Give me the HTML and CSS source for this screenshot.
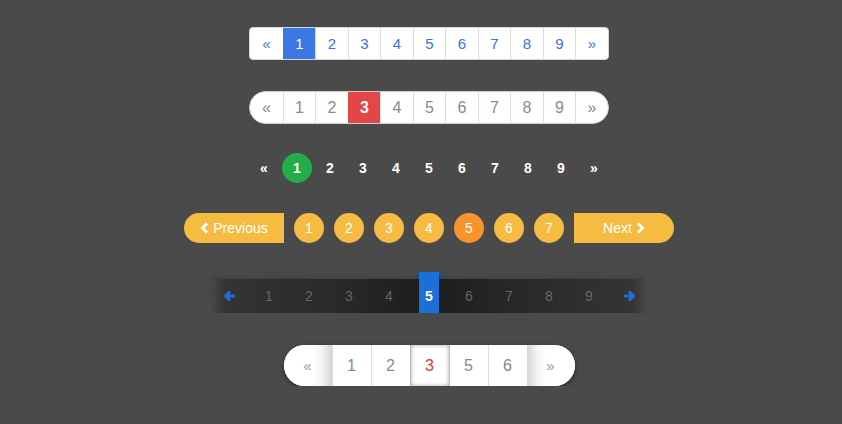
FILE: index.html
```html
<!DOCTYPE html>
<html lang="en">

<head>
    <meta charset="UTF-8">
    <meta name="viewport" content="width=device-width, initial-scale=1.0">
    <title>Pagination Styles</title>
    <link rel="stylesheet" href="styles.css">
</head>

<body>
    <div class="demo">

        <!-- classic boxed -->
        <ul class="pager pager-box">
            <li><a href="#">&laquo;</a></li>
            <li class="active"><a href="#">1</a></li>
            <li><a href="#">2</a></li>
            <li><a href="#">3</a></li>
            <li><a href="#">4</a></li>
            <li><a href="#">5</a></li>
            <li><a href="#">6</a></li>
            <li><a href="#">7</a></li>
            <li><a href="#">8</a></li>
            <li><a href="#">9</a></li>
            <li><a href="#">&raquo;</a></li>
        </ul>

        <!-- rounded ends -->
        <ul class="pager pager-round">
            <li><a href="#">&laquo;</a></li>
            <li><a href="#">1</a></li>
            <li><a href="#">2</a></li>
            <li class="active"><a href="#">3</a></li>
            <li><a href="#">4</a></li>
            <li><a href="#">5</a></li>
            <li><a href="#">6</a></li>
            <li><a href="#">7</a></li>
            <li><a href="#">8</a></li>
            <li><a href="#">9</a></li>
            <li><a href="#">&raquo;</a></li>
        </ul>

        <!-- plain with circle -->
        <ul class="pager pager-dots">
            <li><a href="#">&laquo;</a></li>
            <li class="active"><a href="#">1</a></li>
            <li><a href="#">2</a></li>
            <li><a href="#">3</a></li>
            <li><a href="#">4</a></li>
            <li><a href="#">5</a></li>
            <li><a href="#">6</a></li>
            <li><a href="#">7</a></li>
            <li><a href="#">8</a></li>
            <li><a href="#">9</a></li>
            <li><a href="#">&raquo;</a></li>
        </ul>

        <!-- yellow bubbles -->
        <ul class="pager pager-bubble">
            <li class="prev"><a href="#">
                <svg width="9" height="12" viewBox="0 0 9 12"><path d="M7 1.5 L2.5 6 L7 10.5" fill="none" stroke="#fff" stroke-width="2.8" stroke-linejoin="miter"/></svg>
                Previous</a></li>
            <li><a href="#">1</a></li>
            <li><a href="#">2</a></li>
            <li><a href="#">3</a></li>
            <li><a href="#">4</a></li>
            <li class="active"><a href="#">5</a></li>
            <li><a href="#">6</a></li>
            <li><a href="#">7</a></li>
            <li class="next"><a href="#">Next
                <svg width="9" height="12" viewBox="0 0 9 12"><path d="M2 1.5 L6.5 6 L2 10.5" fill="none" stroke="#fff" stroke-width="2.8" stroke-linejoin="miter"/></svg>
            </a></li>
        </ul>

        <!-- dark ribbon -->
        <ul class="pager pager-ribbon">
            <li class="arrow"><a href="#">
                <svg width="13" height="12" viewBox="0 0 13 12"><path d="M12 6 H3 M7 1.5 L2.5 6 L7 10.5" fill="none" stroke="#1f6fd6" stroke-width="3"/></svg>
            </a></li>
            <li><a href="#">1</a></li>
            <li><a href="#">2</a></li>
            <li><a href="#">3</a></li>
            <li><a href="#">4</a></li>
            <li class="active"><a href="#">5</a></li>
            <li><a href="#">6</a></li>
            <li><a href="#">7</a></li>
            <li><a href="#">8</a></li>
            <li><a href="#">9</a></li>
            <li class="arrow"><a href="#">
                <svg width="13" height="12" viewBox="0 0 13 12"><path d="M1 6 H10 M6 1.5 L10.5 6 L6 10.5" fill="none" stroke="#1f6fd6" stroke-width="3"/></svg>
            </a></li>
        </ul>

        <!-- pill with pressed page -->
        <ul class="pager pager-pill">
            <li class="end first"><a href="#">&laquo;</a></li>
            <li><a href="#">1</a></li>
            <li><a href="#">2</a></li>
            <li class="active"><a href="#">3</a></li>
            <li><a href="#">5</a></li>
            <li><a href="#">6</a></li>
            <li class="end last"><a href="#">&raquo;</a></li>
        </ul>

    </div>
</body>

</html>
```

FILE: styles.css
```css
* {
    margin: 0;
    padding: 0;
    box-sizing: border-box;
}

body {
    font-family: 'Liberation Sans', Arial, sans-serif;
    background-color: #4a4a4a;
    color: #fff;
}

.demo {
    display: flex;
    flex-direction: column;
    align-items: center;
    padding: 27px 0 0 16px;
}

.pager {
    list-style: none;
    display: flex;
}

.pager a {
    display: flex;
    align-items: center;
    justify-content: center;
    text-decoration: none;
    color: inherit;
}

/* boxed */
.pager-box {
    background: #fff;
    border: 1px solid #d6d6d6;
    border-radius: 4px;
    overflow: hidden;
    height: 33px;
    color: #3a74d6;
    font-size: 15px;
}

.pager-box li {
    width: 32.5px;
    border-left: 1px solid #dcdcdc;
}

.pager-box li:first-child {
    border-left: none;
}

.pager-box a {
    height: 100%;
}

.pager-box .active {
    background: #3b78e3;
    color: #fff;
    border-left-color: #3b78e3;
}

/* rounded */
.pager-round {
    margin-top: 31px;
    background: #fff;
    border: 1px solid #d0d0d0;
    border-radius: 17px;
    overflow: hidden;
    height: 33px;
    color: #8a8a8a;
    font-size: 16px;
}

.pager-round li {
    width: 32.5px;
    border-left: 1px solid #dcdcdc;
}

.pager-round li:first-child {
    border-left: none;
}

.pager-round a {
    height: 100%;
}

.pager-round .active {
    background: #e34646;
    color: #fff;
    font-weight: bold;
    border-left-color: #e34646;
}

/* dots */
.pager-dots {
    margin-top: 29px;
    font-size: 14px;
    font-weight: bold;
}

.pager-dots li {
    width: 33px;
    display: flex;
    justify-content: center;
}

.pager-dots a {
    width: 30px;
    height: 30px;
    border-radius: 50%;
}

.pager-dots .active a {
    background: #22ad49;
}

/* bubbles */
.pager-bubble {
    margin-top: 30px;
    gap: 10px;
    font-size: 14px;
}

.pager-bubble a {
    width: 30px;
    height: 30px;
    border-radius: 50%;
    background: #f6bc42;
}

.pager-bubble .active a {
    background: #f7952c;
}

.pager-bubble .prev a,
.pager-bubble .next a {
    width: 100px;
    gap: 4px;
}

.pager-bubble .prev a {
    border-radius: 15px 0 0 15px;
}

.pager-bubble .next a {
    border-radius: 0 15px 15px 0;
}

/* ribbon */
.pager-ribbon {
    margin-top: 36px;
    height: 34px;
    font-size: 14px;
    color: #666;
    background: linear-gradient(to right, rgba(0, 0, 0, 0) 0, rgba(0, 0, 0, 0.3) 4%, rgba(0, 0, 0, 0.45) 30%, rgba(0, 0, 0, 0.62) 50%, rgba(0, 0, 0, 0.45) 70%, rgba(0, 0, 0, 0.3) 96%, rgba(0, 0, 0, 0) 100%);
    box-shadow: 0 -4px 6px -4px rgba(0, 0, 0, 0.25);
}

.pager-ribbon li {
    width: 40px;
    height: 34px;
    display: flex;
    justify-content: center;
}

.pager-ribbon a {
    width: 20px;
    height: 100%;
}

.pager-ribbon .active {
    height: 41px;
    margin-top: -7px;
}

.pager-ribbon .active a {
    position: relative;
    background: #1b6fd8;
    color: #fff;
    font-weight: bold;
    padding-top: 7px;
}

/* folded corners of the raised tab */
.pager-ribbon .active a::before,
.pager-ribbon .active a::after {
    content: '';
    position: absolute;
    top: 2px;
    border-bottom: 5px solid #0e4a98;
}

.pager-ribbon .active a::before {
    left: -6px;
    border-left: 6px solid transparent;
}

.pager-ribbon .active a::after {
    right: -6px;
    border-right: 6px solid transparent;
}

/* pill */
.pager-pill {
    margin-top: 32px;
    height: 41px;
    background: #fff;
    border-radius: 21px;
    box-shadow: 0 2px 5px rgba(0, 0, 0, 0.45);
    font-size: 16px;
    color: #888;
}

.pager-pill li {
    width: 39px;
    border-left: 1px solid #dedede;
}

.pager-pill a {
    height: 100%;
}

.pager-pill .end {
    width: 48px;
    border-left: none;
    color: #999;
    font-size: 15px;
}

.pager-pill .first {
    border-radius: 21px 0 0 21px;
    background: linear-gradient(to right, #fff 60%, #f4f4f4 78%, #d6d6d6 100%);
}

.pager-pill .last {
    border-radius: 0 21px 21px 0;
    background: linear-gradient(to left, #fff 60%, #f4f4f4 78%, #d6d6d6 100%);
}

.pager-pill .active {
    color: #d93a3a;
    box-shadow: inset 0 0 4px rgba(0, 0, 0, 0.35);
    border-left-color: #bbb;
}

.pager-pill .active + li {
    border-left-color: #bbb;
}
```
